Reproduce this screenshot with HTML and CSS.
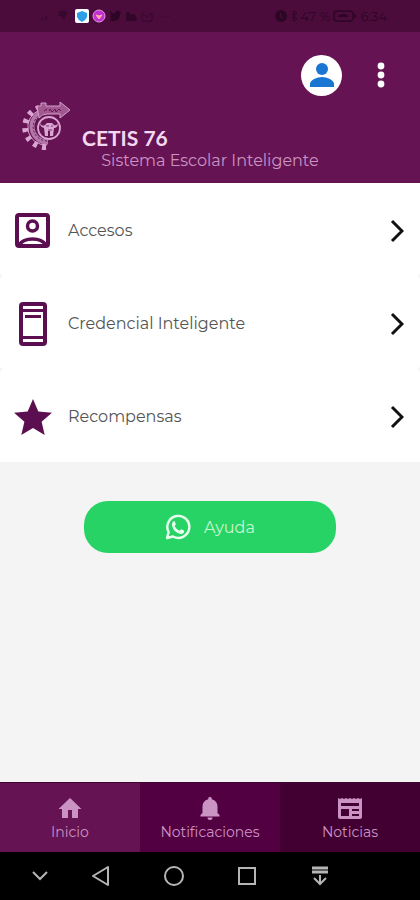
FILE: index.html
```html
<!DOCTYPE html>
<html lang="es">
<head>
  <meta charset="UTF-8">
  <meta name="viewport" content="width=device-width, initial-scale=1.0">
  <title>CETIS 76</title>
  <link rel="stylesheet" href="styles.css">
</head>
<body>
  <div class="app">
    <div class="status-bar">
      <div class="status-group">
        <svg width="34" height="16" viewBox="0 0 34 16" fill="currentColor">
          <path d="M3 12h2v-2H3zM7 12h2V8H7z" opacity=".5"/>
          <path d="M20 4q5-3 10 0l-4 8zM20 7h7v1h-7z" opacity=".6"/>
        </svg>
        <svg width="14" height="14" viewBox="0 0 14 14">
          <rect width="14" height="14" rx="2" fill="#fff"/>
          <path d="M7 2l5 2v4q-1 3-5 5-4-2-5-5V4z" fill="#2d9fe6"/>
        </svg>
        <svg width="14" height="14" viewBox="0 0 14 14">
          <circle cx="7" cy="7" r="6" fill="#c32fd6" stroke="#e29ae0"/>
          <path d="M4 6l3 4 3-4-3 1z" fill="#ffb0a0" stroke="#ffb0a0"/>
        </svg>
        <svg width="66" height="14" viewBox="0 0 66 14" fill="currentColor">
          <path d="M1 2q3 3 5 3 0-4 4-3l2 1-1 2q0 7-7 7-3 0-4-1l3-1-2-2 1-1z"/>
          <path d="M17 3h4v2h5l2 7H17z" opacity=".8"/>
          <path d="M33 4l5 4 5-4v8H33z" fill="none" stroke="currentColor" opacity=".7"/>
          <path d="M51 7h2v1h-2zM55 7h2v1h-2zM59 7h2v1h-2z" opacity=".5"/>
        </svg>
      </div>
      <div class="status-group">
        <svg width="12" height="12" viewBox="0 0 12 12">
          <circle cx="6" cy="6" r="6" fill="currentColor"/>
          <path d="M5.500 3v4l3 1" fill="none" stroke="#4b0c3c"/>
        </svg>
        <svg width="8" height="12" viewBox="0 0 8 12" fill="none" stroke="currentColor">
          <path d="M1 3l6 6-3 2V1l3 2-6 6"/>
        </svg>
        <span>47 %</span>
        <svg width="24" height="12" viewBox="0 0 24 12" fill="none" stroke="currentColor" stroke-width="1.500">
          <rect x="1" y="1" width="19" height="10" rx="3"/>
          <path d="M22 4v4"/>
          <path d="M5 6h10M8 5h5" stroke-width="2"/>
        </svg>
        <span>6:34</span>
      </div>
    </div>

    <header class="header">
      <div class="header-actions">
        <button type="button" class="avatar" aria-label="Perfil">
          <svg width="24" height="24" viewBox="0 0 24 24" fill="#1976d2">
            <circle cx="12" cy="6" r="6"/>
            <path d="M0 24v-3c0-4 7-7 12-7s12 3 12 7v3z"/>
          </svg>
        </button>
        <button type="button" class="menu-button" aria-label="Menú">
          <svg width="8" height="26" viewBox="0 0 8 26" fill="#fff">
            <circle cx="4" cy="4" r="3.400"/>
            <circle cx="4" cy="13" r="3.400"/>
            <circle cx="4" cy="22" r="3.400"/>
          </svg>
        </button>
      </div>
      <div class="brand">
        <svg class="logo" width="50" height="50" viewBox="0 0 50 50" fill="none" stroke="#d9a5d2">
          <path d="M24 46A20 20 0 0 1 17 7" stroke-width="6" stroke-dasharray="4 5"/>
          <path d="M26 41A15.500 15.500 0 0 1 20 11" stroke-width="5" stroke="#b377a9"/>
          <path d="M25 44A18 18 0 0 1 18 9" stroke-width="1"/>
          <path d="M25 40A14 14 0 0 1 18 14" stroke="#651352" stroke-dasharray="2 2"/>
          <path d="M15 5h4V2h5v3h14V1l10 8-10 8v-4H25q-5 0-8 4z" fill="#a1588f" stroke="#d3a0cb"/>
          <path d="M22 10l3-2M27 10l1-2 2 3 3-3 1 3 3-3 2 2" stroke="#651352"/>
          <circle cx="27" cy="27" r="11" fill="#651352" stroke-width="1.800"/>
          <path d="M18 22q2 4 5 2l2-2h5l2 2q3 1 4-2 0 5-4 5l-1 8h-3v-5h-2v5h-3l-1-8q-4-1-4-5z" fill="#d9a5d2" stroke="none"/>
          <path d="M24 25h3M29 25h2M26 29h4" stroke="#7e2e6b"/>
        </svg>
        <h1 class="title">CETIS 76</h1>
      </div>
      <p class="subtitle">Sistema Escolar Inteligente</p>
    </header>

    <main class="content">
      <nav class="list">
        <a href="#accesos" class="list-item">
          <span class="list-icon">
            <svg width="36" height="36" viewBox="0 0 36 36" fill="none" stroke="#5c0f50" stroke-width="4">
              <rect x="2" y="2" width="31" height="31" rx="2"/>
              <circle cx="17.500" cy="13" r="5" stroke-width="3.500"/>
              <path d="M4 32q4-6 13.500-6T31 32" stroke-width="3.500"/>
            </svg>
          </span>
          <span class="list-label">Accesos</span>
          <svg class="chevron" width="14" height="24" viewBox="0 0 14 24"><path d="M2 2l10 10L2 22"/></svg>
        </a>
        <a href="#credencial" class="list-item">
          <span class="list-icon">
            <svg width="28" height="44" viewBox="0 0 28 44" fill="none" stroke="#5c0f50" stroke-width="3">
              <rect x="2" y="2" width="24" height="40" rx="2" stroke-width="4"/>
              <path d="M2 8.500h24M2 35.500h24"/>
              <path d="M6 14.500h16"/>
            </svg>
          </span>
          <span class="list-label">Credencial Inteligente</span>
          <svg class="chevron" width="14" height="24" viewBox="0 0 14 24"><path d="M2 2l10 10L2 22"/></svg>
        </a>
        <a href="#recompensas" class="list-item">
          <span class="list-icon">
            <svg width="38" height="36" viewBox="2 2 20 19" fill="#5c0f50">
              <path d="M12 17.270L18.180 21l-1.640-7.030L22 9.240l-7.190-.61L12 2 9.190 8.630 2 9.240l5.460 4.730L5.820 21z"/>
            </svg>
          </span>
          <span class="list-label">Recompensas</span>
          <svg class="chevron" width="14" height="24" viewBox="0 0 14 24"><path d="M2 2l10 10L2 22"/></svg>
        </a>
      </nav>

      <button type="button" class="help-button">
        <svg width="26" height="26" viewBox="0 0 26 26" fill="none" stroke="#eafff0" stroke-width="2.400">
          <path d="M2 24l1.600-6A11 11 0 1 1 8 22.500z" stroke-linejoin="round"/>
          <path d="M9.500 7l1.400 3.300-1.400 1.600q1.800 3.400 5 4.900l1.700-1.600 3 1.500q0 3.500-4 3.200Q8.600 18.400 7 11.500 6.600 7.500 9.500 7z" fill="#eafff0" stroke="none"/>
        </svg>
        Ayuda
      </button>
    </main>

    <nav class="tabs">
      <a href="#inicio" class="tab tab-home">
        <svg width="24" height="24" viewBox="0 0 24 24" fill="currentColor">
          <path d="M10 22v-8h4v8h6v-9h3.500L12 2 .5 13H4v9z"/>
        </svg>
        Inicio
      </a>
      <a href="#notificaciones" class="tab tab-alerts">
        <svg width="24" height="24" viewBox="0 0 24 24" fill="currentColor">
          <path d="M12 24q2.500 0 2.500-2.500h-5Q9.500 24 12 24zM19.500 17v-6.500c0-3.500-2-6.200-5.700-7.200V2.500c0-2-3.600-2-3.600 0v.8C6.500 4.300 4.500 7 4.500 10.500V17L2.500 19v1.500h19V19z"/>
        </svg>
        Notificaciones
      </a>
      <a href="#noticias" class="tab tab-news">
        <svg width="26" height="24" viewBox="0 0 26 24" fill="currentColor">
          <path fill-rule="evenodd" d="M1 2l2 1 2-1 2 1 2-1 2 1 2-1 2 1 2-1 2 1 2-1 2 1 2-1v19q0 2-2 2H3q-2 0-2-2zM4 7v3h18V7zM4 13v7h8v-7zM15 13v2h7v-2zM15 18v2h7v-2z"/>
        </svg>
        Noticias
      </a>
    </nav>

    <div class="system-nav">
      <button type="button" aria-label="Ocultar">
        <svg width="16" height="10" viewBox="0 0 16 10"><path d="M1 1l7 7 7-7"/></svg>
      </button>
      <button type="button" aria-label="Atrás">
        <svg width="18" height="20" viewBox="0 0 18 20"><path d="M16 1v18L1 10z" stroke-linejoin="round"/></svg>
      </button>
      <button type="button" aria-label="Inicio">
        <svg width="20" height="20" viewBox="0 0 20 20"><circle cx="10" cy="10" r="9"/></svg>
      </button>
      <button type="button" aria-label="Recientes">
        <svg width="18" height="18" viewBox="0 0 18 18"><rect x="1" y="1" width="16" height="16"/></svg>
      </button>
      <button type="button" aria-label="Panel">
        <svg width="16" height="20" viewBox="0 0 16 20"><path d="M0 2h16M0 6h16" stroke-width="3"/><path d="M8 9v9M2 12l6 6 6-6"/></svg>
      </button>
    </div>
  </div>
</body>
</html>
```
FILE: styles.css
```css
* {
  box-sizing: border-box;
  margin: 0;
  padding: 0;
}

body {
  font-family: Montserrat, Inter, 'Open Sans', sans-serif;
  background-color: #f4f4f4;
  color: #555;
}

button {
  border: none;
  background: none;
  font-family: inherit;
  cursor: pointer;
}

a {
  color: inherit;
  text-decoration: none;
}

svg {
  display: block;
  flex-shrink: 0;
}

.app {
  display: flex;
  flex-direction: column;
  min-height: 100vh;
}

.status-bar {
  display: flex;
  align-items: center;
  justify-content: space-between;
  height: 32px;
  padding: 0 33px 0 38px;
  background-color: #4b0c3c;
  color: #2c0625;
  font-size: 13px;
}

.status-group {
  display: flex;
  align-items: center;
  gap: 3px;
}

.header {
  padding: 22px 35px 12px 22px;
  background-color: #651352;
}

.header-actions {
  display: flex;
  align-items: center;
  justify-content: flex-end;
  gap: 35px;
  height: 42px;
}

.avatar {
  display: flex;
  align-items: center;
  justify-content: center;
  width: 41px;
  height: 41px;
  border-radius: 50%;
  background-color: #fff;
}

.brand {
  display: flex;
  align-items: flex-end;
  gap: 10px;
  margin-top: 5px;
}

.title {
  font-family: Lato, sans-serif;
  font-size: 21px;
  line-height: 26px;
  font-weight: 700;
  color: #f3d9f0;
}

.subtitle {
  margin-right: -13px;
  font-size: 16px;
  line-height: 20px;
  text-align: center;
  color: #cb93c4;
}

.content {
  flex: 1;
}

.list-item {
  display: flex;
  align-items: center;
  height: 93px;
  padding: 2px 16px 0 12px;
  border-radius: 4px;
  background-color: #fff;
}

.list-item:first-child {
  border-top-left-radius: 0;
  border-top-right-radius: 0;
}

.list-item:last-child {
  border-bottom-left-radius: 0;
  border-bottom-right-radius: 0;
}

.list-icon {
  display: flex;
  justify-content: center;
  width: 42px;
  margin-right: 14px;
}

.list-label {
  flex: 1;
  font-size: 16px;
  line-height: 24px;
}

.chevron {
  fill: none;
  stroke: #111;
  stroke-width: 3;
}

.help-button {
  display: flex;
  align-items: center;
  justify-content: center;
  gap: 13px;
  width: 60%;
  height: 52px;
  margin: 39px auto;
  border-radius: 24px;
  background-color: #28d366;
  color: #c3f8d1;
  font-size: 16px;
}

.tabs {
  display: grid;
  grid-template-columns: repeat(3, 1fr);
  border-top: 1px solid #3c0532;
  color: #cb93c4;
}

.tab {
  display: flex;
  flex-direction: column;
  align-items: center;
  gap: 2px;
  height: 69px;
  padding-top: 13px;
  font-size: 14px;
  line-height: 20px;
}

.tab-home {
  background-color: #651352;
}

.tab-alerts {
  background-color: #530043;
}

.tab-news {
  background-color: #420032;
}

.system-nav {
  display: grid;
  grid-template-columns: 2fr repeat(4, 3fr);
  height: 48px;
  padding: 0 63px 0 16px;
  background-color: #000;
}

.system-nav button {
  display: flex;
  align-items: center;
  justify-content: center;
}

.system-nav svg {
  fill: none;
  stroke: #b5b5b5;
  stroke-width: 2;
}
```
